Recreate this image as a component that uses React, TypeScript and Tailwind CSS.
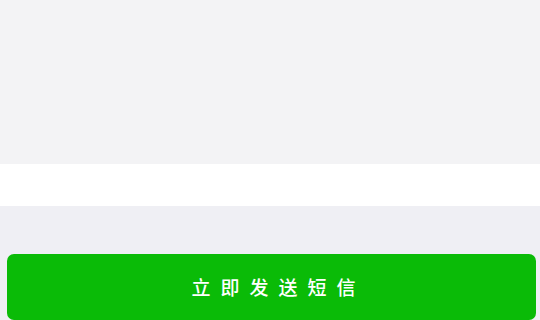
export default function App() {
  return (
    <div className="w-[540px] h-[320px] overflow-hidden bg-[#efeff4] flex flex-col" style={{ fontFamily: '"Noto Sans CJK SC", "Noto Sans", sans-serif' }}>
      {/* 上方内容区 */}
      <div className="h-[165px] bg-[#f3f3f5]" />
      {/* 输入行 */}
      <div className="h-[42px] bg-white" />
      <div className="pl-[7px] pr-[4px] pt-[48px]">
        <button className="w-full h-[66px] rounded-[7px] bg-[#0abb07] text-white text-[19px] font-medium tracking-[10px] pl-[14px] flex items-center justify-center">
          立即发送短信
        </button>
      </div>
    </div>
  );
}
